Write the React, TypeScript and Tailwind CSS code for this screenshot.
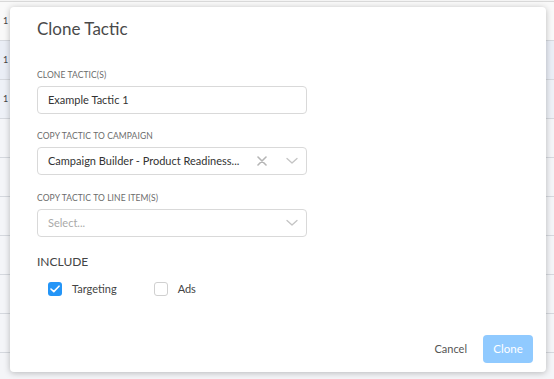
import React from "react";

function Chevron() {
  return (
    <svg width="12" height="8" viewBox="0 0 12 8" fill="none">
      <path d="M1 1.5 L6 6 L11 1.5" stroke="#c4c4c4" strokeWidth="1.3" strokeLinecap="round" strokeLinejoin="round" />
    </svg>
  );
}

function Cross() {
  return (
    <svg width="10" height="10" viewBox="0 0 10 10" fill="none">
      <path d="M1 1 L9 9 M9 1 L1 9" stroke="#b5b5b5" strokeWidth="1.6" strokeLinecap="round" />
    </svg>
  );
}

export default function App() {
  const rows = ["bg-[#f9f9f9]", "bg-[#eaeef6]", "bg-[#eef1f7]", "bg-[#f4f5f8]", "bg-[#f4f5f8]", "bg-[#f4f5f8]", "bg-[#f4f5f8]", "bg-[#f4f5f8]", "bg-[#f4f5f8]", "bg-[#f4f5f8]"];
  return (
    <div className="relative w-[554px] h-[379px] overflow-hidden bg-[#f4f4f4]" style={{ fontFamily: "Lato, 'Open Sans', sans-serif" }}>
      {/* background table */}
      <div className="flex flex-col border-t border-[#d9d9d9] mt-[1px]">
        {rows.map((c, i) => (
          <div key={i} className={`h-[39px] border-b border-[#d5d8de] flex items-center pl-[3px] text-[9px] text-[#444] ${c}`}>
            {i < 3 ? "1" : ""}
          </div>
        ))}
      </div>

      {/* modal */}
      <div className="absolute left-[10px] top-[7px] w-[536px] h-[365px] rounded-[4px] bg-white shadow-[0_1px_6px_rgba(0,0,0,0.25)] flex flex-col pl-[27px] pr-[13px]">
        <div className="mt-[10px] h-[24px] leading-[24px] text-[17px] text-[#4a4a4a]">Clone Tactic</div>

        <div className="mt-[28px] h-[12px] leading-[12px] text-[8.5px] text-[#6b6b6b] tracking-[0.1px]">CLONE TACTIC(S)</div>
        <div className="mt-[5px] w-[270px] h-[28px] rounded-[4px] border border-[#d9d9d9] flex items-center pl-[10px] text-[11px] text-[#333]">
          Example Tactic 1
        </div>

        <div className="mt-[16px] h-[12px] leading-[12px] text-[8.5px] text-[#6b6b6b] tracking-[0.1px]">COPY TACTIC TO CAMPAIGN</div>
        <div className="mt-[5px] w-[270px] h-[28px] rounded-[4px] border border-[#d9d9d9] flex items-center pl-[10px] pr-[8px] text-[11px] text-[#333]">
          <span className="flex-1">Campaign Builder - Product Readiness...</span>
          <span className="w-[10px] flex items-center justify-center mr-[19px]"><Cross /></span>
          <Chevron />
        </div>

        <div className="mt-[17px] h-[12px] leading-[12px] text-[8.5px] text-[#6b6b6b] tracking-[0.1px]">COPY TACTIC TO LINE ITEM(S)</div>
        <div className="mt-[5px] w-[270px] h-[28px] rounded-[4px] border border-[#d9d9d9] flex items-center pl-[10px] pr-[8px] text-[11px] text-[#a9a9a9]">
          <span className="flex-1">Select...</span>
          <Chevron />
        </div>

        <div className="mt-[17px] h-[16px] leading-[16px] text-[12px] text-[#444]">INCLUDE</div>
        <div className="mt-[11px] h-[16px] flex items-center ml-[11px] text-[11px] text-[#444]">
          <div className="w-[14px] h-[14px] rounded-[3px] bg-[#2495f7] flex items-center justify-center">
            <svg width="10" height="8" viewBox="0 0 10 8" fill="none">
              <path d="M1 4 L3.8 6.6 L9 1.2" stroke="white" strokeWidth="1.6" strokeLinecap="round" strokeLinejoin="round" />
            </svg>
          </div>
          <span className="ml-[10px]">Targeting</span>
          <div className="ml-[37px] w-[14px] h-[14px] rounded-[3px] border border-[#d0d0d0] bg-white" />
          <span className="ml-[10px]">Ads</span>
        </div>

        <div className="mt-auto mb-[9px] flex justify-end items-center">
          <span className="text-[11px] text-[#555] mr-[16px]">Cancel</span>
          <div className="w-[50px] h-[28px] rounded-[4px] bg-[#90caff] text-white text-[11.5px] flex items-center justify-center">Clone</div>
        </div>
      </div>
    </div>
  );
}
